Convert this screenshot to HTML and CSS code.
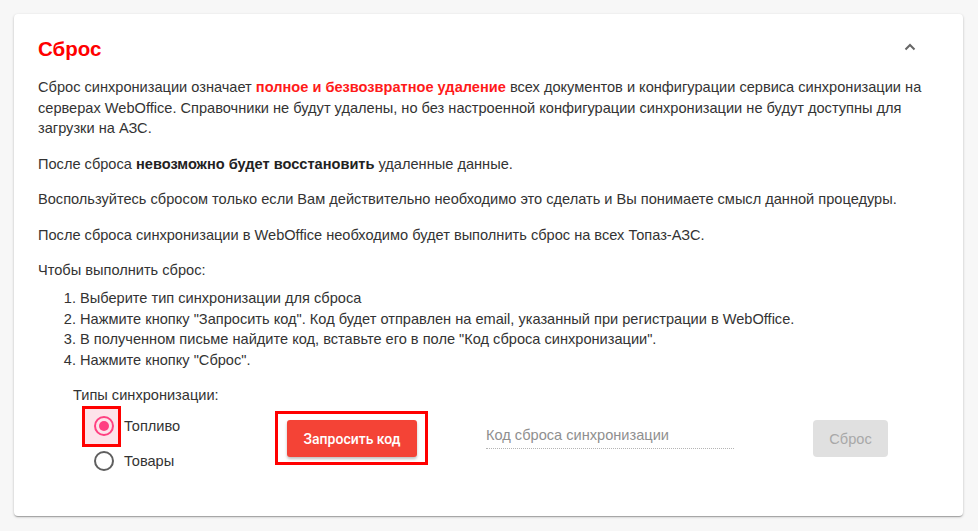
FILE: index.html
```html
<!DOCTYPE html>
<html lang="ru">
<head>
<meta charset="utf-8">
<title>Сброс</title>
<link rel="stylesheet" href="styles.css">
</head>
<body>
<div class="card">
  <div class="card-header">
    <h2 class="title">Сброс</h2>
    <svg class="chevron" width="14" height="10" viewBox="0 0 14 10"><path d="M2.5 7.5 L7 3 L11.5 7.5" fill="none" stroke="#666" stroke-width="2"/></svg>
  </div>
  <div class="card-body">
    <p>Сброс синхронизации означает <b class="danger">полное и безвозвратное удаление</b> всех документов и конфигурации сервиса синхронизации на серверах WebOffice. Справочники не будут удалены, но без настроенной конфигурации синхронизации не будут доступны для загрузки на АЗС.</p>
    <p>После сброса <b>невозможно будет восстановить</b> удаленные данные.</p>
    <p>Воспользуйтесь сбросом только если Вам действительно необходимо это сделать и Вы понимаете смысл данной процедуры.</p>
    <p>После сброса синхронизации в WebOffice необходимо будет выполнить сброс на всех Топаз-АЗС.</p>
    <p class="lead">Чтобы выполнить сброс:</p>
    <ol class="steps">
      <li>Выберите тип синхронизации для сброса</li>
      <li>Нажмите кнопку "Запросить код". Код будет отправлен на email, указанный при регистрации в WebOffice.</li>
      <li>В полученном письме найдите код, вставьте его в поле "Код сброса синхронизации".</li>
      <li>Нажмите кнопку "Сброс".</li>
    </ol>
    <div class="controls">
      <div class="types">
        <div class="types-label">Типы синхронизации:</div>
        <label class="radio-row">
          <span class="radio-slot checked"><span class="annot-radio"></span><span class="radio-circle on"></span></span>
          <span>Топливо</span>
        </label>
        <label class="radio-row">
          <span class="radio-slot"><span class="radio-circle"></span></span>
          <span>Товары</span>
        </label>
      </div>
      <div class="annot-btn">
        <button class="btn-primary">Запросить код</button>
      </div>
      <div class="field">
        <span class="placeholder">Код сброса синхронизации</span>
      </div>
      <button class="btn-disabled">Сброс</button>
    </div>
  </div>
</div>
</body>
</html>
```
FILE: styles.css
```css
html, body {
  margin: 0;
  padding: 0;
}
body {
  background: #f7f7f7;
  padding: 14px 15px 15px 14px;
  font-family: "Liberation Sans", Arial, sans-serif;
  font-size: 14.6px;
  color: #333;
}
.card {
  background: #fff;
  border-radius: 4px;
  box-shadow: 0 1px 3px rgba(0,0,0,0.2), 0 1px 1px rgba(0,0,0,0.14), 0 2px 1px -1px rgba(0,0,0,0.12);
  padding: 0 24px 37px 24px;
}
.card-header {
  display: flex;
  align-items: center;
  justify-content: space-between;
  padding: 23px 0 16px 0;
}
.title {
  margin: 0;
  font-size: 20.5px;
  line-height: 24px;
  font-weight: bold;
  color: #ff0000;
}
.chevron {
  display: block;
  margin-top: -4px;
  margin-right: 22px;
}
.card-body p {
  margin: 0 0 15px;
  line-height: 20.5px;
}
b {
  color: #222;
}
b.danger {
  color: #ff1a1a;
}
.card-body p.lead {
  margin-bottom: 7.5px;
}
.steps {
  margin: 0;
  padding-left: 42px;
  line-height: 20.5px;
}
.controls {
  display: flex;
  align-items: flex-start;
  margin-top: 15px;
  padding-left: 35px;
}
.types {
  width: 202px;
  flex: none;
}
.types-label {
  line-height: 20px;
  margin-bottom: 3.5px;
}
.radio-row {
  display: flex;
  align-items: center;
  height: 35px;
  line-height: 20px;
}
.radio-slot {
  position: relative;
  width: 40px;
  height: 35px;
  margin-left: 11px;
  display: flex;
  align-items: center;
  justify-content: center;
  flex: none;
}
.annot-radio {
  position: absolute;
  left: -2px;
  top: -3px;
  width: 39px;
  height: 41px;
  box-sizing: border-box;
  border: 3px solid #ff0000;
  background: #fde3ea;
}
.radio-circle {
  position: relative;
  width: 20px;
  height: 20px;
  box-sizing: border-box;
  border: 2px solid #5f5f5f;
  border-radius: 50%;
}
.radio-circle.on {
  border-color: #ff4081;
}
.radio-circle.on::after {
  content: "";
  position: absolute;
  left: 3px;
  top: 3px;
  width: 10px;
  height: 10px;
  border-radius: 50%;
  background: #ff4081;
}
.annot-btn {
  flex: none;
  margin-top: 26px;
  border: 3px solid #ff0000;
  padding: 6px 8px 5px 9px;
}
.btn-primary {
  display: block;
  width: 130px;
  height: 37px;
  border: none;
  border-radius: 3px;
  background: #f44336;
  color: #fff;
  font-family: Roboto, "Liberation Sans", sans-serif;
  font-weight: 500;
  font-size: 14px;
  box-shadow: 0 2px 3px rgba(0,0,0,0.25);
  padding: 0;
}
.field {
  flex: none;
  width: 248px;
  margin-left: 58px;
  margin-top: 40px;
  height: 24px;
  border-bottom: 1px dotted #b5b5b5;
  box-sizing: border-box;
  line-height: 20px;
}
.placeholder {
  color: #8f8f8f;
}
.btn-disabled {
  flex: none;
  margin-left: 79px;
  margin-top: 35px;
  width: 75px;
  height: 37px;
  border: none;
  border-radius: 4px;
  background: #e0e0e0;
  color: #a8a8a8;
  font-family: "Liberation Sans", Arial, sans-serif;
  font-size: 14.6px;
  padding: 0;
}
```
